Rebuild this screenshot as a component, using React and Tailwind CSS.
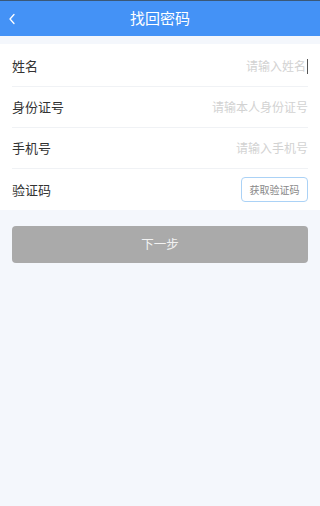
import React from "react";

const font = { fontFamily: '"Noto Sans CJK SC", "Noto Sans", sans-serif' };

function Row({ label, placeholder, cursor, last, children }) {
  return (
    <div className="flex h-[41px] items-center pl-3 pr-3">
      <div className={`flex h-full flex-1 items-center ${last ? "" : "border-b border-[#f0f2f5]"}`}>
        <span className="text-[13px] text-[#333333]">{label}</span>
        <div className="flex flex-1 items-center justify-end">
          {children ? (
            children
          ) : (
            <>
              <span className="text-[12px] text-[#d2d2d2]">{placeholder}</span>
              {cursor && <span className="ml-px h-[15px] w-px bg-[#555]"></span>}
            </>
          )}
        </div>
      </div>
    </div>
  );
}

export default function App() {
  return (
    <div className="h-[506px] w-[320px] bg-[#f4f7fc]" style={font}>
      <div className="border-t border-[#3a5878] bg-[#4492f6]">
        <div className="relative flex h-[35px] items-center justify-center">
          <svg className="absolute left-[8px] top-[12px]" width="8" height="12" viewBox="0 0 8 12">
            <path d="M6 1.5 L2 6 L6 10.5" fill="none" stroke="#ffffff" strokeWidth="1.3" strokeLinecap="round" strokeLinejoin="round" />
          </svg>
          <span className="text-[15px] text-white">找回密码</span>
        </div>
      </div>
      <div className="mt-[8px] bg-white pt-[2px]">
        <Row label="姓名" placeholder="请输入姓名" cursor />
        <Row label="身份证号" placeholder="请输本人身份证号" />
        <Row label="手机号" placeholder="请输入手机号" />
        <Row label="验证码" last>
          <div className="flex h-[25px] w-[67px] items-center justify-center rounded-[4px] border border-[#abd2f6] text-[10px] text-[#888888]">
            获取验证码
          </div>
        </Row>
      </div>
      <div className="px-3 pt-[16px]">
        <div className="flex h-[37px] items-center justify-center rounded-[4px] bg-[#aaaaaa] text-[12.5px] text-[#f2f2f2]">
          下一步
        </div>
      </div>
    </div>
  );
}
